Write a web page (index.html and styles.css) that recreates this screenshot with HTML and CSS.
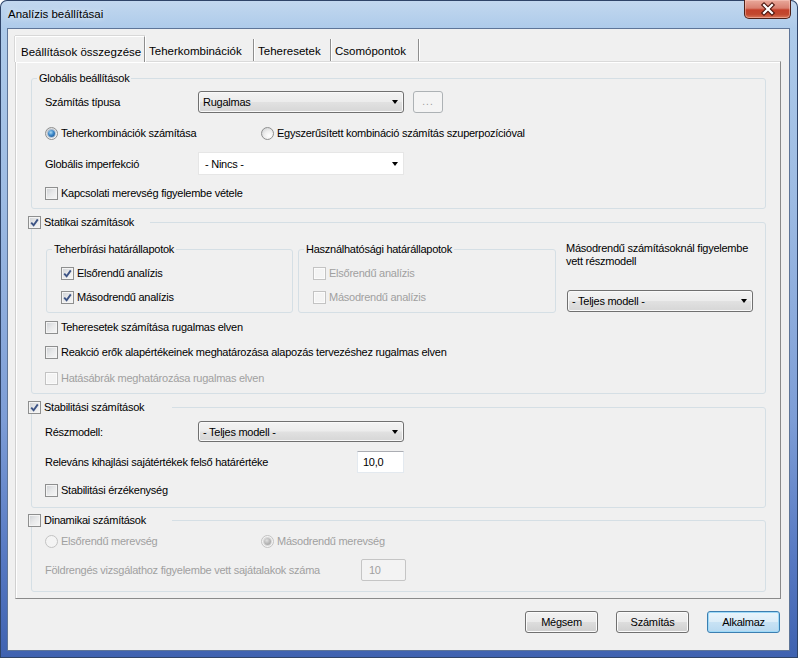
FILE: index.html
```html
<!DOCTYPE html>
<html lang="hu">
<head>
<meta charset="utf-8">
<title>Analízis beállításai</title>
<link rel="stylesheet" href="styles.css">
</head>
<body>
<div class="window">
  <div class="titlebar">
    <span class="title">Analízis beállításai</span>
    <span class="close">
      <svg width="45" height="17" viewBox="0 0 45 17">
        <path d="M19 4 L27 12 M27 4 L19 12" stroke="#4a140c" stroke-width="4.4" stroke-linecap="square" fill="none"/>
        <path d="M19 4 L27 12 M27 4 L19 12" stroke="#ffffff" stroke-width="2.2" stroke-linecap="square" fill="none"/>
      </svg>
    </span>
  </div>
  <div class="client">
    <div class="tabstrip">
      <div class="tab active">Beállítások összegzése</div>
      <div class="tab t2">Teherkombinációk</div>
      <div class="tab t3">Teheresetek</div>
      <div class="tab t4">Csomópontok</div>
    </div>
    <div class="panel">
      <fieldset class="group g-global">
        <legend class="txt-legend">Globális beállítások</legend>
        <div class="gbody">
          <div class="row r-type">
            <span class="lbl w153">Számítás típusa</span>
            <div class="combo w206"><span class="val">Rugalmas</span><i class="arrow"></i></div>
            <span class="dots">...</span>
          </div>
          <div class="row r-calc">
            <span class="opt w216"><span class="rb on"></span>Teherkombinációk számítása</span>
            <span class="opt"><span class="rb"></span>Egyszerűsített kombináció számítás szuperpozícióval</span>
          </div>
          <div class="row r-imp">
            <span class="lbl w153">Globális imperfekció</span>
            <div class="combo flat w206"><span class="val">- Nincs -</span><i class="arrow"></i></div>
          </div>
          <div class="row r-conn">
            <span class="opt"><span class="cb"></span>Kapcsolati merevség figyelembe vétele</span>
          </div>
        </div>
      </fieldset>

      <fieldset class="group g-static">
        <legend class="cb-legend w122"><span class="cb on"><svg viewBox="0 0 11 11"><path d="M2.2 5.6 L4.6 8.2 L8.8 2.4"/></svg></span>Statikai számítások</legend>
        <div class="gbody">
          <div class="subrow">
            <fieldset class="group sub s1">
              <legend class="txt-legend">Teherbírási határállapotok</legend>
              <div class="sbody">
                <div class="row sr1"><span class="opt"><span class="cb on"><svg viewBox="0 0 11 11"><path d="M2.2 5.6 L4.6 8.2 L8.8 2.4"/></svg></span>Elsőrendű analízis</span></div>
                <div class="row sr2"><span class="opt"><span class="cb on"><svg viewBox="0 0 11 11"><path d="M2.2 5.6 L4.6 8.2 L8.8 2.4"/></svg></span>Másodrendű analízis</span></div>
              </div>
            </fieldset>
            <fieldset class="group sub s2">
              <legend class="txt-legend">Használhatósági határállapotok</legend>
              <div class="sbody">
                <div class="row sr1"><span class="opt dis"><span class="cb"></span>Elsőrendű analízis</span></div>
                <div class="row sr2"><span class="opt dis"><span class="cb"></span>Másodrendű analízis</span></div>
              </div>
            </fieldset>
            <div class="rightcol">
              <p class="note">Másodrendű számításoknál figyelembe<br>vett részmodell</p>
              <div class="combo w186"><span class="val">- Teljes modell -</span><i class="arrow"></i></div>
            </div>
          </div>
          <div class="row c1"><span class="opt"><span class="cb"></span>Teheresetek számítása rugalmas elven</span></div>
          <div class="row c2"><span class="opt"><span class="cb"></span>Reakció erők alapértékeinek meghatározása alapozás tervezéshez rugalmas elven</span></div>
          <div class="row c3"><span class="opt dis"><span class="cb"></span>Hatásábrák meghatározása rugalmas elven</span></div>
        </div>
      </fieldset>

      <fieldset class="group g-stab">
        <legend class="cb-legend w144"><span class="cb on"><svg viewBox="0 0 11 11"><path d="M2.2 5.6 L4.6 8.2 L8.8 2.4"/></svg></span>Stabilitási számítások</legend>
        <div class="gbody">
          <div class="row st1">
            <span class="lbl w153">Részmodell:</span>
            <div class="combo w206 h21"><span class="val">- Teljes modell -</span><i class="arrow"></i></div>
          </div>
          <div class="row st2">
            <span class="lbl w312">Releváns kihajlási sajátértékek felső határértéke</span>
            <span class="field w47">10,0</span>
          </div>
          <div class="row st3"><span class="opt"><span class="cb"></span>Stabilitási érzékenység</span></div>
        </div>
      </fieldset>

      <fieldset class="group g-dyn">
        <legend class="cb-legend w144"><span class="cb"></span>Dinamikai számítások</legend>
        <div class="gbody">
          <div class="row d1">
            <span class="opt dis w216"><span class="rb"></span>Elsőrendű merevség</span>
            <span class="opt dis"><span class="rb on"></span>Másodrendű merevség</span>
          </div>
          <div class="row d2">
            <span class="lbl dis w316">Földrengés vizsgálathoz figyelembe vett sajátalakok száma</span>
            <span class="field dis w45">10</span>
          </div>
        </div>
      </fieldset>
    </div>
    <div class="buttons">
      <span class="btn">Mégsem</span>
      <span class="btn">Számítás</span>
      <span class="btn default">Alkalmaz</span>
    </div>
  </div>
</div>
</body>
</html>
```

FILE: styles.css
```css
* { box-sizing: border-box; }
html, body { margin: 0; padding: 0; }
body {
  width: 798px;
  height: 658px;
  overflow: hidden;
  background: #ffffff;
  font-family: "Liberation Sans", Arial, sans-serif;
  font-size: 11px;
  line-height: 14px;
  color: #000;
}

/* ---------- window frame ---------- */
.window {
  width: 798px;
  height: 658px;
  display: flex;
  flex-direction: column;
  border-radius: 7px 7px 0 0;
  background: linear-gradient(to bottom, #c3d8ef 0px, #aecbea 28px, #9dbbe3 200px, #7d9dd6 420px, #5678c2 560px, #3f62b0 658px);
  box-shadow: inset 0 0 0 1px #2f4468;
}

.titlebar {
  height: 29px;
  flex: none;
  display: flex;
  justify-content: space-between;
  align-items: flex-start;
}
.title {
  padding: 7px 0 0 8px;
  font-size: 11.5px;
  line-height: 15px;
  color: #000;
  text-shadow: 0 0 6px rgba(255,255,255,0.9);
}
.close {
  width: 47px;
  height: 19px;
  margin-right: 7px;
  border: 1px solid #4f2118;
  border-top: none;
  border-radius: 0 0 5px 5px;
  background: linear-gradient(to bottom, #e9a99b 0%, #d98070 45%, #c4412b 55%, #c2492f 80%, #d9775b 100%);
  box-shadow: inset 0 0 0 1px rgba(255,210,200,0.45);
  display: flex;
}
.close svg { display: block; margin: 1px 0 0 0; }

.client {
  height: 621px;
  flex: none;
  margin: 0 9px 0 8px;
  background: #f0f0f0;
  box-shadow: 0 0 0 1px #5e7598;
  padding: 7px 9px 0 7px;
  display: flex;
  flex-direction: column;
  letter-spacing: -0.25px;
}

/* ---------- tabs ---------- */
.tabstrip {
  height: 25px;
  display: flex;
  align-items: flex-end;
  flex: none;
  font-size: 11.5px;
  letter-spacing: 0;
}
.tab {
  height: 22px;
  padding: 5px 0 0 4px;
  border-right: 1px solid #8e8e8e;
  box-shadow: 1px 0 0 #ffffff;
  white-space: nowrap;
}
.tab.active {
  width: 130px;
  height: 26px;
  margin-bottom: -1px;
  padding: 8px 0 0 5px;
  background: #f0f0f0;
  border-left: 1px solid #ffffff;
  border-top: 1px solid #ffffff;
  border-right: 1px solid #8e8e8e;
  box-shadow: -1px 0 0 #d8d8d8, 0 -1px 0 #d8d8d8, 1px 0 0 #ffffff;
  position: relative;
  z-index: 1;
}
.t2 { width: 109px; }
.t3 { width: 77px; }
.t4 { width: 88px; }

.panel {
  width: 766px;
  height: 538px;
  flex: none;
  border-top: 1px solid #dadada;
  border-left: 1px solid #d0d0d0;
  border-right: 1px solid #8a8a8a;
  border-bottom: 1px solid #8a8a8a;
  box-shadow: inset 1px 1px 0 #ffffff;
  padding: 9px 14px 0 15px;
  display: flex;
  flex-direction: column;
}

/* ---------- group boxes ---------- */
.group {
  margin: 0;
  padding: 0;
  min-width: 0;
  border: 1px solid #d5dfe5;
  border-radius: 3px;
}
.txt-legend {
  padding: 0 2px;
  margin-left: 5px;
  height: 14px;
  line-height: 14px;
}
.cb-legend {
  display: flex;
  align-items: center;
  height: 14px;
  padding: 0;
  margin-left: -4px;
}
.cb-legend .cb { margin-right: 3px; }
.w122 { width: 122px; }
.w144 { width: 144px; }

.g-global { height: 138px; }
.g-static { height: 179px; margin-top: 6px; }
.g-stab { height: 108px; margin-top: 6px; }
.g-dyn { height: 79px; margin-top: 5px; }

.gbody {
  padding-left: 13px;
  display: flex;
  flex-direction: column;
}

.row {
  display: flex;
  align-items: center;
  white-space: nowrap;
}
.lbl { flex: none; }
.w153 { width: 153px; }
.w216 { width: 216px; }
.w312 { width: 312px; }
.w316 { width: 316px; }
.w206 { width: 206px; }
.w186 { width: 186px; }
.w47 { width: 47px; }
.w45 { width: 45px; }

/* global rows */
.r-type { margin-top: 6px; }
.r-calc { margin-top: 13px; }
.r-imp { margin-top: 12px; }
.r-conn { margin-top: 11px; }

/* static rows */
.subrow {
  display: flex;
  margin-top: 13px;
  margin-left: 1px;
}
.sub { height: 71px; }
.s1 { width: 247px; }
.s2 { width: 258px; margin-left: 5px; }
.sbody { padding-left: 14px; }
.sr1 { margin-top: 10px; }
.sr2 { margin-top: 10px; }
.rightcol {
  margin-left: 10px;
  display: flex;
  flex-direction: column;
}
.note {
  margin: 0;
  line-height: 13px;
}
.rightcol .combo { margin-top: 22px; margin-left: 1px; }
.c1 { margin-top: 7px; }
.c2 { margin-top: 11px; }
.c3 { margin-top: 12px; }

/* stability */
.st1 { margin-top: 7px; }
.st2 { margin-top: 9px; }
.st3 { margin-top: 10px; }

/* dynamic */
.d1 { margin-top: 7px; }
.d2 { margin-top: 11px; }

/* ---------- controls ---------- */
.opt {
  display: flex;
  align-items: center;
  flex: none;
}
.opt > .cb, .opt > .rb { margin-right: 3px; }
.dis { color: #a0a0a0; }

.cb {
  width: 13px;
  height: 13px;
  flex: none;
  border: 1px solid #8e8f8f;
  background: linear-gradient(135deg, #cdd0d4 0%, #e8e9ea 50%, #f7f7f7 100%);
  box-shadow: inset 0 0 0 1px #f4f4f4;
  display: flex;
  align-items: center;
  justify-content: center;
}
.cb svg {
  width: 11px;
  height: 11px;
  display: block;
}
.cb svg path {
  fill: none;
  stroke: #3d5485;
  stroke-width: 1.9;
}
.dis .cb {
  border-color: #c3c3c3;
  background: #f4f4f4;
  box-shadow: inset 0 0 0 1px #fbfbfb;
}

.rb {
  width: 13px;
  height: 13px;
  flex: none;
  border-radius: 50%;
  border: 1px solid #8e8f8f;
  background: radial-gradient(circle at 65% 70%, #ffffff 0%, #eeeeee 45%, #c9cbce 100%);
  position: relative;
}
.rb.on::after {
  content: "";
  position: absolute;
  left: 2px;
  top: 2px;
  width: 7px;
  height: 7px;
  border-radius: 50%;
  background: radial-gradient(circle at 40% 35%, #a9d9f2 0%, #3b86c8 45%, #16467c 100%);
  box-shadow: 0 0 0 1px rgba(60,110,160,0.35);
}
.dis .rb {
  border-color: #c3c3c3;
  background: #f4f4f4;
}
.dis .rb.on::after {
  background: radial-gradient(circle at 40% 35%, #e0e0e0 0%, #b4b4b4 55%, #9a9a9a 100%);
  box-shadow: 0 0 0 1px rgba(160,160,160,0.35);
}

.combo {
  height: 22px;
  flex: none;
  display: flex;
  align-items: center;
  border: 1px solid #707070;
  border-radius: 3px;
  background: linear-gradient(to bottom, #f3f3f3 0%, #ececec 48%, #e1e1e1 52%, #d6d6d6 100%);
  box-shadow: inset 0 0 0 1px #f9f9f9;
  padding-left: 4px;
}
.combo.h21 { height: 21px; }
.combo.flat {
  height: 23px;
  background: #ffffff;
  border-color: #e6e6e6;
  border-radius: 0;
  box-shadow: none;
  padding-left: 6px;
}
.arrow {
  margin-left: auto;
  margin-right: 5px;
  width: 0;
  height: 0;
  border-left: 3.5px solid transparent;
  border-right: 3.5px solid transparent;
  border-top: 4px solid #000;
}

.dots {
  width: 30px;
  height: 22px;
  margin-left: 9px;
  border: 1px solid #adb2b5;
  border-radius: 3px;
  background: #f4f4f4;
  color: #9a9a9a;
  display: flex;
  align-items: center;
  justify-content: center;
  font-size: 10px;
  letter-spacing: 1px;
}

.field {
  height: 22px;
  flex: none;
  display: flex;
  align-items: center;
  padding-left: 5px;
  background: #ffffff;
  border: 1px solid #e3e9ef;
  border-top-color: #abadb3;
}
.field.dis {
  background: #f3f3f3;
  border: 1px solid #c5c5c5;
  border-radius: 2px;
  padding-left: 7px;
}

/* ---------- buttons ---------- */
.buttons {
  margin-top: 12px;
  display: flex;
  justify-content: flex-end;
  gap: 18px;
}
.btn {
  width: 73px;
  height: 22px;
  border: 1px solid #707070;
  border-radius: 3px;
  background: linear-gradient(to bottom, #f2f2f2 0%, #ebebeb 48%, #dddddd 52%, #cfcfcf 100%);
  box-shadow: inset 0 0 0 1px #fbfbfb;
  display: flex;
  align-items: center;
  justify-content: center;
}
.btn.default {
  border-color: #3c7fb1;
  background: linear-gradient(to bottom, #eaf5fc 0%, #dcedf8 48%, #c8e2f4 52%, #b8d9f0 100%);
  box-shadow: inset 0 0 0 1px #9fdaf8;
}
```
